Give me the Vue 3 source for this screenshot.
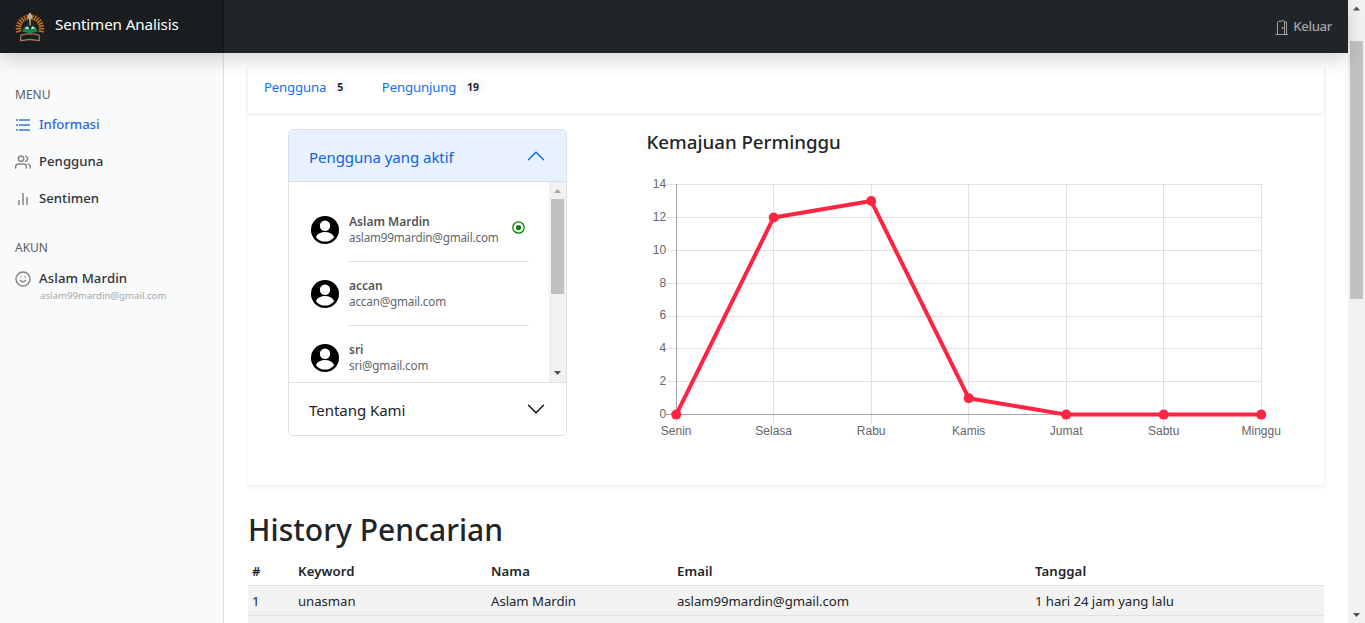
<script setup>
const feathers = Array.from({ length: 17 }, (_, i) => -104 + i * 13)

const users = [
  { name: 'Aslam Mardin', email: 'aslam99mardin@gmail.com', online: true },
  { name: 'accan', email: 'accan@gmail.com', online: false },
  { name: 'sri', email: 'sri@gmail.com', online: false },
]

const days = ['Senin', 'Selasa', 'Rabu', 'Kamis', 'Jumat', 'Sabtu', 'Minggu']
const values = [0, 12, 13, 1, 0, 0, 0]
const ticks = [0, 2, 4, 6, 8, 10, 12, 14]
const px = (i) => 36.2 + i * 97.5
const py = (v) => 244.6 - (v * 230) / 14
const snap = (n) => Math.floor(n) + 0.5
const line = values.map((v, i) => `${px(i)},${py(v)}`).join(' ')
</script>

<template>
  <div class="screen">
    <div class="page">
      <header class="navbar">
        <div class="brand">
          <svg class="logo" width="32" height="32" viewBox="0 0 32 32">
            <g stroke="#c4701f" stroke-width="1.6">
              <line v-for="a in feathers" :key="a" x1="16" y1="8.6" x2="16" y2="3.2" :transform="`rotate(${a} 16 17.5)`" />
            </g>
            <path d="M9 18q2-7 7-8 5 1 7 8l-1 3H10z" fill="#1c2b27" />
            <path d="M8.500 18.500l4-2 3.500 2 3.500-2 4 2-.5 2.500-4 .5-3 1.500-3-1.500-4-.5z" fill="#118a50" />
            <path d="M10 17.300l3.800-2 1.400 2.600zM22 17.300l-3.800-2-1.400 2.600z" fill="#dce5df" />
            <path d="M16 1.500c3.400 3 2.300 6 .8 7l-.2 6h-1.200l-.2-6c-1.500-1-2.600-4 .8-7z" fill="#b5b09a" />
            <path d="M7 24.200q9-2.500 18 0l.5 5.300-3.200-.2q-6.300-1.600-12.600 0l-3.200.2z" fill="#191d20" stroke="#a87559" stroke-width="1.300" />
          </svg>
          <span class="t brand-name">Sentimen Analisis</span>
        </div>
        <a class="logout">
          <svg width="14" height="15" viewBox="0 0 14 15" fill="none" stroke="#a0a2a4" stroke-width="1">
            <path d="M.5 14.500h12.500M2.500 14V2.500q0-1 1-1L8.500.7q1-.2 1 1V14M9.500 2h2V14" /><path d="M7.500 7v2" stroke-width="1.500" />
          </svg>
          <span class="t">Keluar</span>
        </a>
      </header>

      <div class="layout">
        <aside class="sidebar">
          <h6 class="t group">MENU</h6>
          <a class="item active">
            <svg width="16" height="16" viewBox="0 0 16 16" stroke="currentColor">
              <path d="M4 3h11M4 8h11M4 13h11" stroke-width="2" /><path d="M1 3h1.600M1 8h1.600M1 13h1.600" stroke-width="2" />
            </svg>
            <span class="t">Informasi</span>
          </a>
          <a class="item">
            <svg width="16" height="16" viewBox="0 0 24 24" fill="none" stroke="currentColor" stroke-width="2.200" stroke-linecap="round" stroke-linejoin="round">
              <path d="M17 21v-2a4 4 0 0 0-4-4H5a4 4 0 0 0-4 4v2M23 21v-2a4 4 0 0 0-3-3.870M16 3.130a4 4 0 0 1 0 7.750" /><circle cx="9" cy="7" r="4" />
            </svg>
            <span class="t">Pengguna</span>
          </a>
          <a class="item">
            <svg class="bars" width="16" height="16" viewBox="0 0 16 16" stroke="currentColor" stroke-width="2">
              <path d="M4 9v5M8 2v12M12 6v8" />
            </svg>
            <span class="t">Sentimen</span>
          </a>
          <h6 class="t group second">AKUN</h6>
          <a class="item account">
            <svg width="16" height="16" viewBox="0 0 24 24" fill="none" stroke="currentColor" stroke-width="2.200" stroke-linecap="round">
              <circle cx="12" cy="12" r="10.500" /><path d="M8 14s1.500 2.200 4 2.200 4-2.200 4-2.200M9 9h.01M15 9h.01" />
            </svg>
            <span class="t">Aslam Mardin</span>
          </a>
          <div class="t mail">aslam99mardin@gmail.com</div>
        </aside>

        <main class="main">
          <section class="card">
            <nav class="tabs">
              <a class="t tab-one">Pengguna</a><span class="t badge">5</span>
              <a class="t tab-two">Pengunjung</a><span class="t badge">19</span>
            </nav>
            <div class="card-body">
              <div class="accordion">
                <div class="acc-head open">
                  <span class="t">Pengguna yang aktif</span>
                  <svg width="20" height="20" viewBox="0 0 16 16" fill="none" stroke="#0c63e4" stroke-linecap="round"><path d="M2 11l6-6 6 6" /></svg>
                </div>
                <div class="acc-body">
                  <div class="users">
                    <div v-for="u in users" :key="u.name" class="user">
                      <svg width="28" height="28" viewBox="0 0 28 28">
                        <circle cx="14" cy="14" r="14" fill="#000" /><circle cx="14" cy="9.800" r="5.200" fill="#fff" />
                        <path d="M4.800 21C6.500 17.500 10 16 14 16s7.500 1.500 9.200 5A11.500 11.500 0 0 1 4.800 21z" fill="#fff" />
                      </svg>
                      <div class="user-info">
                        <div>
                          <div class="t user-name">{{ u.name }}</div>
                          <div class="t user-mail">{{ u.email }}</div>
                        </div>
                        <svg v-if="u.online" class="online" width="13" height="13" viewBox="0 0 13 13">
                          <circle cx="6.500" cy="6.500" r="5.700" fill="none" stroke="#078007" stroke-width="1.300" /><circle cx="6.500" cy="6.500" r="2.600" fill="#078007" />
                        </svg>
                      </div>
                    </div>
                  </div>
                  <div class="scroll inner">
                    <svg width="17" height="17"><path d="M5 11l3.500-4 3.500 4z" fill="#a3a3a3" /></svg>
                    <div class="thumb"></div>
                    <svg width="17" height="17"><path d="M5 6l3.500 4 3.500-4z" fill="#505050" /></svg>
                  </div>
                </div>
                <div class="acc-head closed">
                  <span class="t">Tentang Kami</span>
                  <svg width="20" height="20" viewBox="0 0 16 16" fill="none" stroke="#000" stroke-linecap="round"><path d="M2 5l6 6 6-6" /></svg>
                </div>
              </div>
              <div class="chart">
                <h5 class="t">Kemajuan Perminggu</h5>
                <svg width="660" height="280" viewBox="0 0 660 280">
                  <g shape-rendering="crispEdges" stroke-width="1">
                    <line v-for="v in ticks" :key="v" x1="26" x2="621.5" :y1="snap(py(v))" :y2="snap(py(v))" :stroke="v ? '#e2e2e2' : '#a5a5a5'" />
                    <line v-for="(d, i) in days" :key="d" :x1="snap(px(i))" :x2="snap(px(i))" y1="14" y2="254" stroke="rgba(0,0,0,.11)" />
                    <line x1="36.500" x2="36.500" y1="14" y2="245" stroke="#a5a5a5" />
                  </g>
                  <g class="labels">
                    <text v-for="v in ticks" :key="v" x="26.200" :y="py(v) + 3.4" text-anchor="end">{{ v }}</text>
                    <text v-for="(d, i) in days" :key="d" :x="px(i)" y="265" text-anchor="middle">{{ d }}</text>
                  </g>
                  <polyline :points="line" fill="none" stroke="#ff2442" stroke-width="4" stroke-linejoin="round" />
                  <circle v-for="(v, i) in values" :key="i" :cx="px(i)" :cy="py(v)" r="5" fill="#ff2442" />
                </svg>
              </div>
            </div>
          </section>

          <h2 class="t">History Pencarian</h2>
          <div class="table">
            <div class="row head"><b class="t">#</b><b class="t">Keyword</b><b class="t">Nama</b><b class="t">Email</b><b class="t">Tanggal</b></div>
            <div class="row odd"><span class="t">1</span><span class="t">unasman</span><span class="t">Aslam Mardin</span><span class="t">aslam99mardin@gmail.com</span><span class="t">1 hari 24 jam yang lalu</span></div>
            <div class="row odd"></div>
          </div>
        </main>
      </div>
    </div>
    <div class="scroll outer">
      <svg width="17" height="17"><path d="M5 10.500l3.500-4 3.500 4z" fill="#505050" /></svg>
      <div class="thumb"></div>
      <svg width="17" height="17"><path d="M5 7l3.500 4 3.500-4z" fill="#505050" /></svg>
    </div>
  </div>
</template>

<style>
html, body { overflow: hidden; background: #fff; }
</style>

<style scoped>
* { box-sizing: border-box; }
.screen { display: flex; width: 1365px; height: 623px; overflow: hidden; font-family: "Noto Sans", "Open Sans", sans-serif; color: #212529; }
.page { width: 1348px; height: 623px; display: flex; flex-direction: column; }
.t { white-space: nowrap; }
h2, h5, h6 { margin: 0; }
.navbar { position: relative; z-index: 2; height: 53px; flex: none; background: #212529; box-shadow: 0 8px 16px rgba(0, 0, 0, .15); display: flex; justify-content: space-between; }
.brand { width: 224px; background: #191d20; border-right: 1px solid #14171a; display: flex; padding: 11px 0 0 14px; }
.brand-name { color: #fff; font-size: 15.2px; line-height: 24px; margin: 1px 0 0 9px; letter-spacing: -.12px; }
.logout { display: flex; padding: 20px 16px 0 0; color: #a0a2a4; gap: 4px; }
.logout .t { font-size: 13.2px; font-weight: 500; line-height: 20px; margin-top: -4px; letter-spacing: -.35px; }
.layout { flex: 1; min-height: 0; display: flex; }
.sidebar { width: 224px; flex: none; background: #f8fafc; border-right: 1px solid #dee0e3; padding: 33px 0 0 15px; }
.group { font-size: 12px; font-weight: 400; line-height: 18px; color: #5a5c60; }
.second { margin-top: 23px; }
.item { display: flex; align-items: center; gap: 8px; height: 37px; color: #333; font-size: 13.2px; font-weight: 500; }
.item svg { color: #858585; margin-top: 2px; }
.item .bars { color: #a2a2a2; }
.group + .item { margin-top: 1px; }
.sidebar .active { color: #3068d8; letter-spacing: -.1px; }
.sidebar .active svg { color: #6798ec; shape-rendering: crispEdges; }
.sidebar .active path { stroke-width: 1.4; }
.sidebar .account { margin-top: 2px; letter-spacing: .1px; }
.mail { font-size: 9.650px; line-height: 12px; margin: -6px 0 0 25px; color: #a6a6a6; }
.main { flex: 1; min-width: 0; padding: 13px 24px 0; display: flex; flex-direction: column; }
.card { height: 419px; flex: none; box-shadow: 0 2px 4px rgba(0, 0, 0, .075); }
.tabs { height: 47px; box-shadow: 0 2px 4px rgba(0, 0, 0, .075); display: flex; align-items: flex-start; padding: 11px 0 0 16px; font-size: 13.2px; line-height: 20px; color: #0d6efd; letter-spacing: -.15px; }
.badge { background: #f8f9fa; color: #212529; font-size: 10.500px; font-weight: 700; line-height: 17px; border-radius: 9px; padding: 0 6px; margin: 2px 0 0 5px; letter-spacing: 0; }
.tab-two { margin-left: 32.500px; }
.card-body { display: flex; padding: 16px 0 0 40px; }
.accordion { width: 279px; height: 307px; border: 1px solid #dee0e6; border-radius: 5px; overflow: hidden; flex: none; }
.acc-head { display: flex; justify-content: space-between; align-items: center; height: 52px; padding: 0 20px; font-size: 15px; letter-spacing: -.04px; }
.open { color: #0c63e4; background: #e7f1ff; border-bottom: 1px solid #d5dee9; padding-top: 3px; }
.open svg { margin-top: -2px; }
.closed .t { padding-top: 2px; }
.acc-body { display: flex; height: 201px; border-bottom: 1px solid #dee0e6; }
.users { flex: 1; padding: 34px 20px 0 22px; overflow: hidden; }
.user { display: flex; gap: 10px; height: 64px; }
.user-info { flex: 1; height: 46px; border-bottom: 1px solid #dee2e6; display: flex; justify-content: space-between; }
.user-name { color: #555; font-size: 12px; font-weight: 600; line-height: 16px; margin-top: -2px; }
.user-mail { color: #60656a; font-size: 11.700px; line-height: 15px; letter-spacing: -.17px; }
.online { margin: 5px 4px 0 0; }
.scroll { width: 17px; background: #f1f1f1; display: flex; flex-direction: column; align-items: center; flex: none; }
.scroll svg { flex: none; display: block; }
.scroll svg:last-child { margin-top: auto; }
.thumb { width: 13px; background: #c1c1c1; }
.inner .thumb { height: 95px; }
.outer .thumb { height: 258px; margin-top: 24px; }
.chart { margin-left: 73px; display: flex; flex-direction: column; }
.chart h5 { font-size: 18.700px; font-weight: 500; line-height: 24px; margin: 1px 0 16px 6.500px; }
.chart svg { display: block; }
.labels { font: 12px "Liberation Sans", Arial, sans-serif; fill: #666; }
.main h2 { font-size: 30px; font-weight: 500; line-height: 38px; margin-top: 26px; letter-spacing: .05px; }
.table { margin-top: 7px; font-size: 13.200px; }
.row { display: grid; grid-template-columns: 46px 193px 186px 358px 1fr; height: 30px; line-height: 30px; border-bottom: 1px solid #dee2e6; }
.row .t { padding-left: 4px; }
.row span.t { letter-spacing: -.05px; }
.row b { font-weight: 600; }
.head { letter-spacing: .1px; }
.odd { background: #f2f2f2; }
</style>
